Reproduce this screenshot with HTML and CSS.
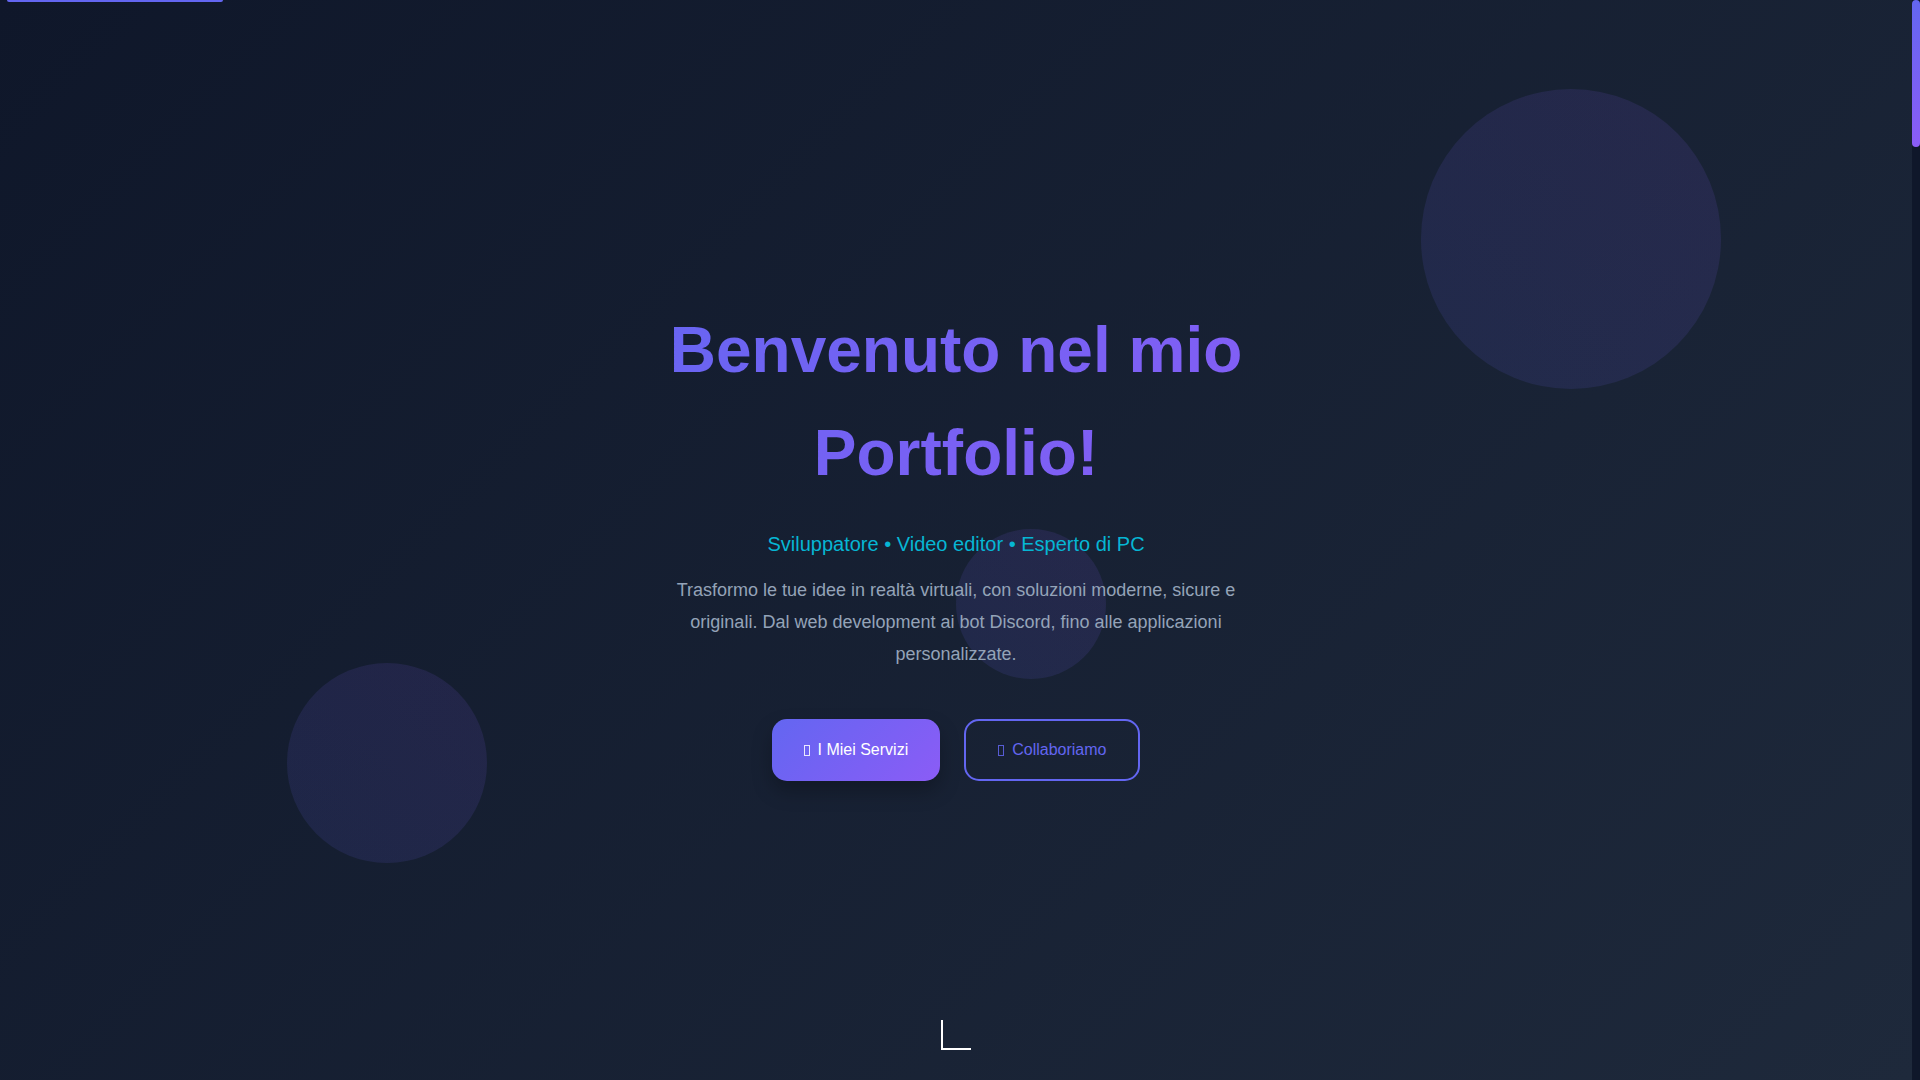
FILE: index.html
```html
<!DOCTYPE html>
<html lang="it">
<head>
<meta charset="utf-8">
<title>Portfolio</title>
<link rel="stylesheet" href="styles.css">
</head>
<body>
<div class="top-progress"></div>
<div class="scroll-track"><div class="scroll-thumb"></div></div>
<section class="hero">
  <div class="shape shape-right"></div>
  <div class="shape shape-left"></div>
  <div class="shape shape-mid"></div>
  <div class="hero-content">
    <h1 class="hero-title">Benvenuto nel mio Portfolio!</h1>
    <p class="hero-subtitle">Sviluppatore • Video editor • Esperto di PC</p>
    <p class="hero-text">Trasformo le tue idee in realtà virtuali, con soluzioni moderne, sicure e originali. Dal web development ai bot Discord, fino alle applicazioni personalizzate.</p>
    <div class="hero-buttons">
      <a class="btn btn-primary" href="#servizi"><span class="icon-box"></span>I Miei Servizi</a>
      <a class="btn btn-outline" href="#contatti"><span class="icon-box"></span>Collaboriamo</a>
    </div>
  </div>
  <div class="scroll-indicator"></div>
</section>
</body>
</html>
```
FILE: styles.css
```css
html, body {
  margin: 0;
  padding: 0;
  overflow: hidden;
}
body {
  font-family: "Liberation Sans", Arial, sans-serif;
  background: #0f172a;
  color: #e2e8f0;
}
.top-progress {
  position: fixed;
  top: 0;
  left: 7px;
  width: 216px;
  height: 2px;
  background: #6366f1;
  border-radius: 0 0 2px 2px;
  z-index: 10;
}
.scroll-track {
  position: fixed;
  top: 0;
  right: 0;
  bottom: 0;
  width: 8px;
  background: #0f172a;
  z-index: 10;
}
.scroll-thumb {
  height: 147px;
  border-radius: 4px;
  background: linear-gradient(180deg, #6366f1, #8b5cf6);
}
.hero {
  position: relative;
  height: 1080px;
  margin-right: 8px;
  overflow: hidden;
  background: linear-gradient(135deg, #0f172a 0%, #1e293b 100%);
  display: flex;
  align-items: center;
  justify-content: center;
}
.shape {
  position: absolute;
  border-radius: 50%;
  background: linear-gradient(45deg, #6366f1, #8b5cf6);
  opacity: 0.12;
}
.shape-right {
  left: 1421px;
  top: 89px;
  width: 300px;
  height: 300px;
}
.shape-left {
  left: 287px;
  top: 663px;
  width: 200px;
  height: 200px;
}
.shape-mid {
  left: 956px;
  top: 529px;
  width: 150px;
  height: 150px;
}
.hero-content {
  position: relative;
  z-index: 1;
  max-width: 800px;
  text-align: center;
  display: flex;
  flex-direction: column;
  align-items: center;
}
.hero-title {
  margin: 0 0 25px;
  font-size: 64px;
  font-weight: 700;
  line-height: 102.4px;
  background: linear-gradient(135deg, #6366f1 0%, #8b5cf6 100%);
  -webkit-background-clip: text;
  background-clip: text;
  color: transparent;
}
.hero-subtitle {
  margin: 0 0 16px;
  font-size: 20px;
  line-height: 30px;
  color: #06b6d4;
}
.hero-text {
  margin: 0 0 48px;
  max-width: 600px;
  font-size: 18px;
  line-height: 1.77;
  color: #94a3b8;
}
.hero-buttons {
  display: flex;
  gap: 24px;
  justify-content: center;
}
.btn {
  display: inline-flex;
  align-items: center;
  border-radius: 15px;
  font-size: 16px;
  line-height: 22px;
  text-decoration: none;
}
.btn-primary {
  padding: 20px 32px;
  background: linear-gradient(135deg, #6366f1, #8b5cf6);
  color: #ffffff;
  box-shadow: 0 10px 20px rgba(0, 0, 0, 0.25);
}
.btn-outline {
  padding: 18px 32px;
  border: 2px solid #6366f1;
  color: #6366f1;
  background: transparent;
}
.icon-box {
  display: inline-block;
  width: 4px;
  height: 9px;
  border: 1px solid currentColor;
  margin-right: 8px;
  margin-top: 2px;
  opacity: 0.85;
}
.scroll-indicator {
  position: absolute;
  left: 941px;
  bottom: 30px;
  width: 28px;
  height: 28px;
  border-left: 2px solid #ffffff;
  border-bottom: 2px solid #ffffff;
}
```
